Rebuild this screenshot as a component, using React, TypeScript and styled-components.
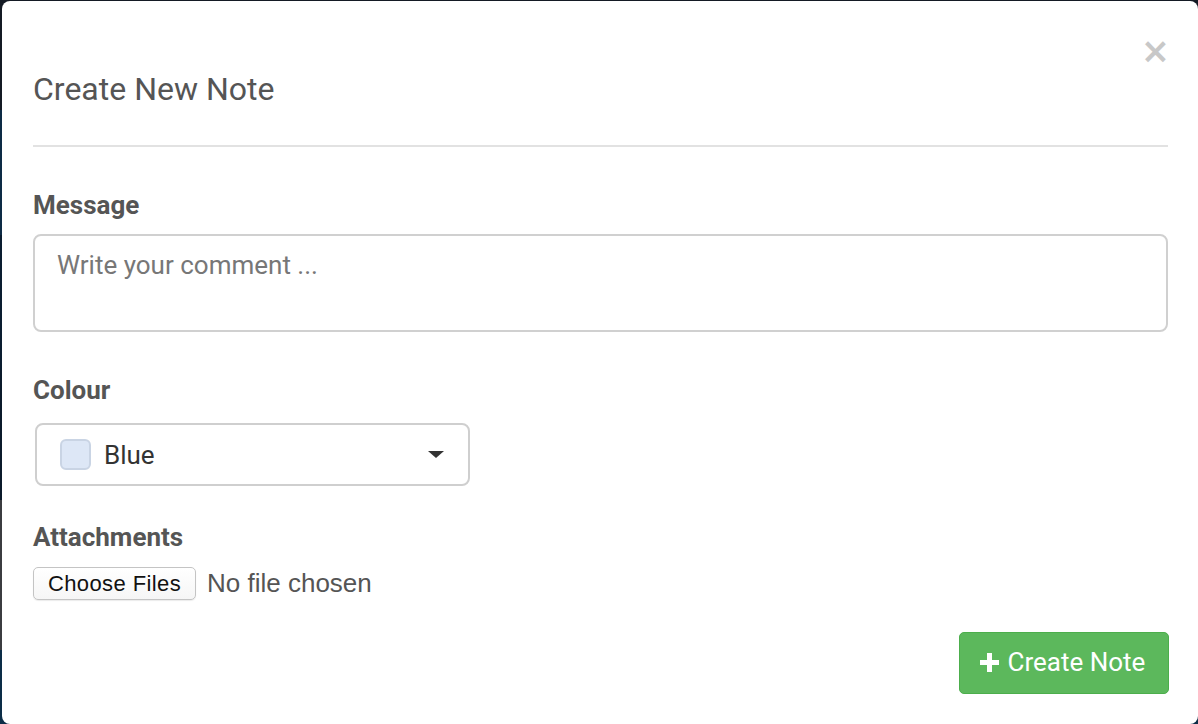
import React from "react";
import styled, { createGlobalStyle } from "styled-components";

const Global = createGlobalStyle`
  html, body { margin: 0; padding: 0; }
  body {
    width: 1198px;
    height: 724px;
    overflow: hidden;
    font-family: Roboto, "Noto Sans", sans-serif;
    background: linear-gradient(
      to bottom,
      #141a24 0px, #141a24 110px,
      #0d2b45 110px, #0d2b45 235px,
      #0a1d30 235px, #0a1d30 370px,
      #0b1a2b 370px, #0b1a2b 500px,
      #3b3c40 500px, #3b3c40 650px,
      #0c2d47 650px, #0c2d47 724px
    );
  }
`;

const Backdrop = styled.div`
  width: 1198px;
  height: 724px;
  padding: 1px 0 0 2px;
  box-sizing: border-box;
`;

const Modal = styled.div`
  width: 1196px;
  height: 723px;
  background: #fff;
  border-radius: 8px;
  box-sizing: border-box;
  padding: 0 30px 0 31px;
  display: flex;
  flex-direction: column;
  position: relative;
`;

const Header = styled.div`
  padding: 66px 0 34px;
  border-bottom: 2px solid #e2e2e2;
`;

const Title = styled.h4`
  margin: 0;
  font-size: 32px;
  line-height: 44px;
  font-weight: 400;
  color: #555;
`;

const Close = styled.button`
  position: absolute;
  top: 28px;
  right: 28px;
  border: 0;
  background: none;
  padding: 0;
  font-family: "DejaVu Sans", sans-serif;
  font-size: 35px;
  line-height: 44px;
  font-weight: 700;
  color: #c8c8c8;
  cursor: pointer;
`;

const Body = styled.div`
  padding-top: 41px;
  display: flex;
  flex-direction: column;
`;

const Group = styled.div<{ $gap: number; $after: number }>`
  display: flex;
  flex-direction: column;
  gap: ${(p) => p.$gap}px;
  margin-bottom: ${(p) => p.$after}px;
`;

const Label = styled.label`
  font-size: 26px;
  line-height: 34px;
  font-weight: 700;
  color: #555;
`;

const TextArea = styled.textarea`
  box-sizing: border-box;
  height: 98px;
  width: 100%;
  border: 2px solid #d0d0d0;
  border-radius: 8px;
  padding: 12px 22px;
  font-family: Roboto, sans-serif;
  font-size: 26px;
  line-height: 34px;
  color: #333;
  resize: none;
  outline: none;
  &::placeholder { color: #777; }
`;

const Select = styled.div`
  box-sizing: border-box;
  margin-left: 2px;
  width: 435px;
  height: 63px;
  border: 2px solid #cfcfcf;
  border-radius: 8px;
  display: flex;
  align-items: center;
  padding: 0 24px 0 23px;
  gap: 13px;
`;

const Swatch = styled.span<{ $color: string }>`
  width: 31px;
  height: 31px;
  box-sizing: border-box;
  border-radius: 6px;
  background: ${(p) => p.$color};
  border: 2px solid #c9d4e4;
`;

const SelectText = styled.span`
  flex: 1;
  font-size: 26px;
  color: #333;
`;

const Caret = styled.span`
  width: 0;
  height: 0;
  border-left: 8px solid transparent;
  border-right: 8px solid transparent;
  border-top: 7px solid #333;
`;

const FileRow = styled.div`
  display: flex;
  align-items: center;
  gap: 11px;
`;

const FileButton = styled.button`
  box-sizing: border-box;
  height: 33px;
  width: 163px;
  padding: 0;
  border: 1px solid #c4c4c4;
  border-radius: 5px;
  background: linear-gradient(#fff, #f6f6f6);
  box-shadow: 0 1px 1px rgba(0, 0, 0, 0.08);
  font-family: "Liberation Sans", Arial, sans-serif;
  font-size: 22px;
  letter-spacing: 0.4px;
  color: #111;
`;

const FileText = styled.span`
  font-family: "Liberation Sans", Arial, sans-serif;
  font-size: 26px;
  color: #555;
`;

const Footer = styled.div`
  display: flex;
  justify-content: flex-end;
  margin-top: 32px;
`;

const PrimaryButton = styled.button`
  box-sizing: border-box;
  width: 210px;
  height: 62px;
  background: #5cb85c;
  border: 1px solid #4cae4c;
  border-radius: 5px;
  color: #fff;
  font-family: Roboto, sans-serif;
  font-size: 26px;
  display: flex;
  align-items: center;
  justify-content: center;
  gap: 8px;
  padding: 0 4px 2px 0;
  margin-right: -1px;
`;

const PlusIcon = () => (
  <svg width="21" height="21" viewBox="0 0 21 21">
    <path d="M10.5 1v19M1 10.5h19" stroke="#fff" strokeWidth="5" strokeLinecap="butt" />
  </svg>
);

export default function App() {
  return (
    <>
      <Global />
      <Backdrop>
        <Modal>
          <Close aria-label="Close">×</Close>
          <Header>
            <Title>Create New Note</Title>
          </Header>
          <Body>
            <Group $gap={12} $after={41}>
              <Label>Message</Label>
              <TextArea placeholder="Write your comment ..." />
            </Group>
            <Group $gap={16} $after={34}>
              <Label>Colour</Label>
              <Select>
                <Swatch $color="#dde7f6" />
                <SelectText>Blue</SelectText>
                <Caret />
              </Select>
            </Group>
            <Group $gap={13} $after={0}>
              <Label>Attachments</Label>
              <FileRow>
                <FileButton>Choose Files</FileButton>
                <FileText>No file chosen</FileText>
              </FileRow>
            </Group>
            <Footer>
              <PrimaryButton>
                <PlusIcon />
                Create Note
              </PrimaryButton>
            </Footer>
          </Body>
        </Modal>
      </Backdrop>
    </>
  );
}
